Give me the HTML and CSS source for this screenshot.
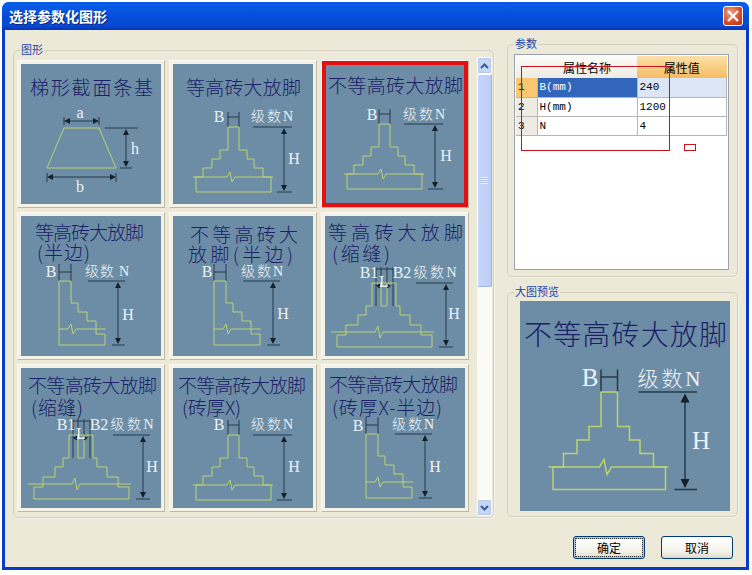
FILE: index.html
```html
<!DOCTYPE html>
<html lang="zh-CN">
<head>
<meta charset="utf-8">
<title>选择参数化图形</title>
<link rel="stylesheet" href="styles.css">
</head>
<body>
<svg class="defs" width="0" height="0" aria-hidden="true">
  <defs>
    <g id="full">
      <path class="dim" d="M55 48V63M66 48V63M55 53H66M80 63H119M111 66V125M104 128H119"/>
      <path class="head" d="M111 64l-3 6h6zM111 127l-3-6h6z"/>
      <path class="wall" d="M55 63V86H47V95H39V104H30V113H23V128H98V113H90V104H81V95H74V86H66V63Z"/>
      <path class="wall" d="M20 113H54L57 108L59 118L62 113H100"/>
    </g>
    <g id="half">
      <path class="dim" d="M38 48V65M50 48V65M38 56H50M67 65H104M97 68V126M91 129H104"/>
      <path class="head" d="M97 66l-3 6h6zM97 128l-3-6h6z"/>
      <path class="wall" d="M38 65H50V87H57V96H66V105H75V118H84V129H38Z"/>
      <path class="wall" d="M38 113H47L50 108L52 118L55 113H85"/>
    </g>
    <g id="joint">
      <path class="dim" d="M51 51V90M56 51V67M62 51V67M68 51V90M51 53H68M91 67H128M121 70V128M114 131H128"/>
      <path class="head" d="M121 68l-3 6h6zM121 130l-3-6h6z"/>
      <path class="wall" d="M47 67H71V90H75V99H85V109H96V119H107V131H12V119H21V109H33V99H41V90H47Z"/>
      <path class="wall" d="M56 67V90H62V67"/>
      <path class="wall" d="M6 116H50L53 110L55 122L58 116H109"/>
      <path class="arrow" d="M53 70H64"/>
      <path class="head-dark" d="M51 70l4-2.500v5zM66 70l-4-2.500v5z"/>
    </g>
  </defs>
</svg>

<main class="window">
  <header class="titlebar">
    <h1 class="title">选择参数化图形</h1>
    <button class="close" type="button" aria-label="关闭">
      <svg width="14" height="14" viewBox="0 0 14 14"><path class="close-x" d="M2 2L12 12M12 2L2 12"/></svg>
    </button>
  </header>

  <div class="client">
    <div class="panes">
      <section class="group group-shapes">
        <h2 class="legend">图形</h2>
        <div class="cards">
          <div class="card"><svg class="thumb" viewBox="0 0 140 140">
            <text class="t" x="9" y="31" textLength="123">梯形截面条基</text>
            <path class="dim" d="M43 53V61M78 53V61M46 57H75M84 64H117M105 67V101M99 104H111M26 109V118M95 109V118M29 113H92"/>
            <path class="head" d="M43 57l6-3v6zM78 57l-6-3v6zM105 65l-3 6h6zM105 103l-3-6h6zM26 113l6-3v6zM95 113l-6-3v6z"/>
            <path class="wall" d="M43 64H78L95 104H26Z"/>
            <text class="l" x="59" y="54">a</text><text class="l" x="114" y="90">h</text><text class="l" x="59" y="128">b</text>
          </svg></div>

          <div class="card"><svg class="thumb" viewBox="0 0 140 140">
            <text class="t" x="13" y="31" textLength="115">等高砖大放脚</text>
            <use href="#full"/>
            <text class="l" x="46" y="58">B</text><text class="n" x="99" y="57" textLength="42">级数N</text><text class="l" x="121" y="100">H</text>
          </svg></div>

          <div class="card card-selected"><svg class="thumb" viewBox="0 0 140 140">
            <text class="t" x="3" y="29" textLength="135">不等高砖大放脚</text>
            <use href="#full" x="-1" y="-3"/>
            <text class="l" x="47" y="56">B</text><text class="n" x="99" y="55" textLength="42">级数N</text><text class="l" x="121" y="97">H</text>
          </svg></div>

          <div class="card"><svg class="thumb" viewBox="0 0 140 140">
            <text class="t" x="14" y="24" textLength="109">等高砖大放脚</text>
            <text class="t" x="16" y="44" textLength="53">(半边)</text>
            <use href="#half"/>
            <text class="l" x="30" y="61">B</text><text class="n" x="86" y="60" textLength="44">级数 N</text><text class="l" x="107" y="104">H</text>
          </svg></div>

          <div class="card"><svg class="thumb" viewBox="0 0 140 140">
            <text class="t" x="17" y="26" textLength="108">不等高砖大</text>
            <text class="t" x="15" y="46" textLength="105">放脚(半边)</text>
            <use href="#half" x="3"/>
            <text class="l" x="34" y="61">B</text><text class="n" x="89" y="60" textLength="42">级数N</text><text class="l" x="110" y="103">H</text>
          </svg></div>

          <div class="card"><svg class="thumb" viewBox="0 0 140 140">
            <text class="t" x="3" y="24" textLength="135">等高砖大放脚</text>
            <text class="t" x="7" y="45" textLength="58">(缩缝)</text>
            <use href="#joint"/>
            <text class="l" x="44" y="62">B1</text><text class="l" x="77" y="62">B2</text><text class="l" x="59" y="71">L</text><text class="n" x="110" y="61" textLength="43">级数N</text><text class="l" x="129" y="103">H</text>
          </svg></div>

          <div class="card"><svg class="thumb" viewBox="0 0 140 140">
            <text class="t" x="7" y="25" textLength="129">不等高砖大放脚</text>
            <text class="t" x="10" y="47" textLength="52">(缩缝)</text>
            <use href="#joint" x="1"/>
            <text class="l" x="45" y="62">B1</text><text class="l" x="78" y="62">B2</text><text class="l" x="60" y="71">L</text><text class="n" x="111" y="61" textLength="43">级数N</text><text class="l" x="131" y="104">H</text>
          </svg></div>

          <div class="card"><svg class="thumb" viewBox="0 0 140 140">
            <text class="t" x="5" y="25" textLength="128">不等高砖大放脚</text>
            <text class="t" x="9" y="47" textLength="59">(砖厚X)</text>
            <use href="#full" y="4"/>
            <text class="l" x="46" y="62">B</text><text class="n" x="99" y="61" textLength="42">级数N</text><text class="l" x="121" y="104">H</text>
          </svg></div>

          <div class="card"><svg class="thumb" viewBox="0 0 140 140">
            <text class="t" x="4" y="24" textLength="129">不等高砖大放脚</text>
            <text class="t" x="7" y="47" textLength="110">(砖厚X-半边)</text>
            <use href="#half" x="3" y="1"/>
            <text class="l" x="33" y="63">B</text><text class="n" x="88" y="61" textLength="42">级数N</text><text class="l" x="110" y="104">H</text>
          </svg></div>
        </div>

        <div class="scrollbar">
          <div class="scroll-btn"><svg width="9" height="6" viewBox="0 0 9 6"><path class="chev" d="M1 5L4.500 1.500L8 5"/></svg></div>
          <div class="scroll-thumb"><span class="grip"></span></div>
          <div class="scroll-track"></div>
          <div class="scroll-btn"><svg width="9" height="6" viewBox="0 0 9 6"><path class="chev" d="M1 1L4.500 4.500L8 1"/></svg></div>
        </div>
      </section>

      <div class="side">
        <section class="group group-params">
          <h2 class="legend">参数</h2>
          <div class="grid-box">
            <table class="props">
              <thead>
                <tr><th class="corner"></th><th class="col-name">属性名称</th><th class="col-value">属性值</th></tr>
              </thead>
              <tbody>
                <tr class="current"><th>1</th><td class="sel">B(mm)</td><td class="val">240</td></tr>
                <tr><th>2</th><td>H(mm)</td><td>1200</td></tr>
                <tr><th>3</th><td>N</td><td>4</td></tr>
              </tbody>
            </table>
            <div class="mark mark-big"></div>
            <div class="mark mark-small"></div>
          </div>
        </section>

        <section class="group group-preview">
          <h2 class="legend">大图预览</h2>
          <svg class="preview" viewBox="0 0 210 210">
            <text class="t t-big" x="4" y="44" textLength="203">不等高砖大放脚</text>
            <use href="#full" transform="translate(-1.500 -3.500) scale(1.500)"/>
            <text class="l l-big" x="70" y="85">B</text><text class="n n-big" x="149" y="85" textLength="63">级数N</text><text class="l l-big" x="181" y="148">H</text>
          </svg>
        </section>
      </div>
    </div>

    <footer class="actions">
      <button class="btn btn-default" type="button">确定</button>
      <button class="btn" type="button">取消</button>
    </footer>
  </div>
</main>
</body>
</html>
```

FILE: styles.css
```css
* { box-sizing: border-box; }

html, body {
  margin: 0;
  width: 752px;
  height: 575px;
  overflow: hidden;
  background: #fff;
}

body {
  padding: 2px 3px 5px 2px;
  font-family: "Noto Sans CJK SC", "Liberation Sans", sans-serif;
}

.defs { position: absolute; }

.window {
  height: 568px;
  display: flex;
  flex-direction: column;
  background: #ece9d8;
  border: 3px solid #0a3acb;
  border-top: 0;
  border-radius: 7px 7px 0 0;
}

.titlebar {
  height: 28px;
  margin: 0 -3px;
  padding: 0 6px 0 7px;
  display: flex;
  align-items: center;
  justify-content: space-between;
  border-radius: 7px 7px 0 0;
  background: linear-gradient(#0a58e2 0, #075ce8 12%, #044cd8 55%, #0849d2 85%, #0435b4 100%);
}

.title {
  margin: 0;
  font-size: 14px;
  font-weight: 700;
  letter-spacing: 0;
  color: #fff;
  text-shadow: 1px 1px 0 #0a2a80;
}

.close {
  width: 20px;
  height: 20px;
  padding: 0;
  display: flex;
  align-items: center;
  justify-content: center;
  border: 1px solid #fff;
  border-radius: 3px;
  background: radial-gradient(circle at 35% 30%, #f0a080, #d9502a 55%, #b92c10);
}

.close-x {
  fill: none;
  stroke: #fff;
  stroke-width: 2.400;
}

.client {
  flex: 1;
  min-height: 0;
  display: flex;
  flex-direction: column;
}

.panes {
  display: flex;
  align-items: flex-start;
  gap: 13px;
  padding: 14px 0 0 8px;
}

.group {
  position: relative;
  border: 1px solid #d4d0bd;
  border-radius: 5px;
  box-shadow: 1px 1px 0 #f6f4ea;
}

.legend {
  position: absolute;
  left: 6px;
  top: -9px;
  margin: 0;
  padding: 0 1px;
  background: #ece9d8;
  font-size: 11px;
  line-height: 15px;
  font-weight: 400;
  color: #1846a8;
}

.group-shapes {
  width: 481px;
  height: 468px;
  margin-top: 6px;
  padding: 6px 0 0 3px;
  display: flex;
}

.cards {
  display: grid;
  grid-template-columns: repeat(3, 148px);
  grid-auto-rows: 148px;
  gap: 4px;
  margin-top: 3px;
}

.card {
  padding: 4px;
  background: #f4f2e6;
  border-right: 1px solid #bdb8a0;
  border-bottom: 1px solid #bdb8a0;
  border-top: 1px solid #faf9f2;
  border-left: 1px solid #faf9f2;
}

.card > .thumb { margin: -1px; }

.thumb {
  display: block;
  width: 140px;
  height: 140px;
  background: #6c8da5;
}

.card-selected .thumb {
  outline: 4px solid #e01014;
  outline-offset: -1px;
}

.preview {
  display: block;
  width: 210px;
  height: 210px;
  background: #6c8da5;
}

.t {
  font-family: "Noto Sans CJK SC", sans-serif;
  font-size: 19px;
  font-weight: 300;
  fill: #1a2166;
}

.t-big { font-size: 28px; }

.l, .n {
  font-family: "Liberation Serif", "Noto Sans CJK SC", serif;
  text-anchor: middle;
  fill: #eef2f6;
}

.l { font-size: 16px; }
.n { font-size: 14px; font-weight: 300; }
.l-big { font-size: 25px; }
.n-big { font-size: 21px; }

.wall {
  fill: none;
  stroke: #bbd270;
  stroke-width: 1;
}

.preview .wall { stroke: #c6de58; }

.dim {
  fill: none;
  stroke: #26384a;
  stroke-width: 1;
}

.head, .head-dark { fill: #14202c; }

.arrow {
  fill: none;
  stroke: #f2f2f2;
  stroke-width: 1;
}

.scrollbar {
  width: 15px;
  height: 459px;
  margin: 0 0 0 8px;
  display: flex;
  flex-direction: column;
}

.scroll-btn {
  height: 17px;
  flex: none;
  display: flex;
  align-items: center;
  justify-content: center;
  border: 1px solid #fff;
  border-radius: 2px;
  background: #c4d5f6;
  box-shadow: 0 0 0 1px #b8c8e8 inset;
}

.chev {
  fill: none;
  stroke: #3a5c94;
  stroke-width: 2;
}

.scroll-thumb {
  height: 213px;
  flex: none;
  display: flex;
  align-items: center;
  justify-content: center;
  border: 1px solid #fff;
  border-right-color: #9db5e4;
  border-bottom-color: #9db5e4;
  border-radius: 2px;
  background: linear-gradient(90deg, #c6d6f8, #bccdf4);
}

.grip {
  width: 7px;
  height: 7px;
  background: repeating-linear-gradient(#eef3fd 0 1px, #a9bde8 1px 2px);
  margin-top: 0;
}

.scroll-track {
  flex: 1;
  background: #fbfbf6;
}

.side {
  display: flex;
  flex-direction: column;
  gap: 15px;
  width: 231px;
}

.group-params {
  height: 233px;
  padding: 9px 8px 6px 6px;
}

.group-preview {
  height: 225px;
  padding: 8px 0 0 12px;
}

.grid-box {
  position: relative;
  height: 100%;
  background: #fff;
  border: 1px solid #99a2b0;
  padding: 1px;
}

.props {
  width: 211px;
  table-layout: fixed;
  border-collapse: collapse;
  font-family: "Liberation Mono", "Noto Sans CJK SC", monospace;
  font-size: 11px;
}

.props th, .props td {
  height: 19px;
  padding: 0 2px;
  font-weight: 400;
  text-align: left;
  color: #000;
  border-right: 1px solid #b5b5b5;
  border-bottom: 1px solid #b5b5b5;
}

.props tbody th {
  width: 21px;
  background: #eeece2;
}

.props thead th {
  height: 22px;
  text-align: center;
  font-family: "Noto Sans CJK SC", sans-serif;
  font-size: 12px;
  border: 0;
  background: linear-gradient(#fbfbf8, #eeece2);
}

.props .corner { width: 21px; }
.props .col-name { width: 100px; }

.props thead .col-value { background: linear-gradient(#fce0a8, #f5bc62); }
.props .current th { background: #f9c672; }
.props .sel { background: #3266bd; color: #fff; }
.props .val { background: #dde6f4; }

.mark {
  position: absolute;
  border: 1px solid #c8141e;
}

.mark-big { left: 6px; top: 11px; width: 149px; height: 85px; }
.mark-small { left: 169px; top: 89px; width: 12px; height: 7px; }

.actions {
  display: flex;
  justify-content: flex-end;
  gap: 16px;
  padding: 18px 13px 0 0;
}

.btn {
  width: 72px;
  height: 23px;
  padding: 0;
  font-family: "Noto Sans CJK SC", sans-serif;
  font-size: 12px;
  color: #000;
  border: 1px solid #003c74;
  border-radius: 3px;
  background: linear-gradient(#fff, #f3f2ea 70%, #dcd8c8);
}

.btn-default {
  box-shadow: inset 0 0 0 2px #a9c4ec;
  outline: 1px dotted #333;
  outline-offset: -3px;
}
```
